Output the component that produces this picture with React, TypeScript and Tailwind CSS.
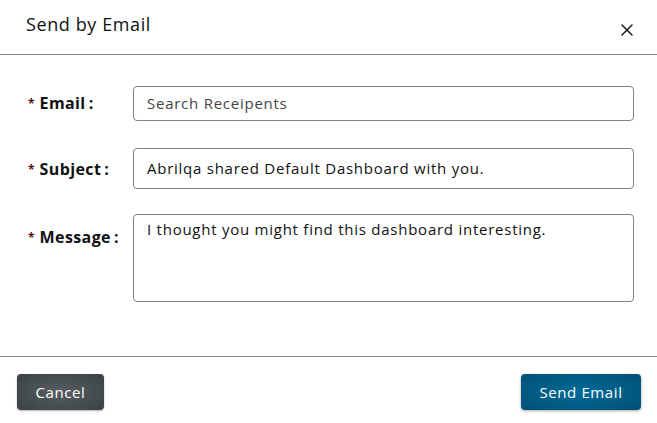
import { X } from 'lucide-react';

const fields = [
  { label: 'Email', value: 'Search Receipents', placeholder: true, box: 'h-[35px] flex items-center', labelPad: 'pt-[6px]' },
  { label: 'Subject', value: 'Abrilqa shared Default Dashboard with you.', placeholder: false, box: 'h-[41px] flex items-center', labelPad: 'pt-[10px]' },
  { label: 'Message', value: 'I thought you might find this dashboard interesting.', placeholder: false, box: 'h-[88px] pt-[3px]', labelPad: 'pt-[12px]' },
];

export default function App() {
  return (
    <div className="w-[657px] h-[423px] bg-white flex flex-col font-['Open_Sans',sans-serif] text-[#1a1a1a] overflow-hidden">
      {/* Header */}
      <div className="h-[55px] flex items-start justify-between pl-[26px] pr-[20px] pt-[12px] border-b border-[#8a8a8a]">
        <h1 className="text-[18px] leading-[24px] tracking-[0.6px] text-[#111]">Send by Email</h1>
        <X className="w-[20px] h-[20px] mt-[8px] text-[#222]" strokeWidth={1.9} />
      </div>

      {/* Form */}
      <div className="flex-1 flex flex-col pt-[31px] pl-[28px] pr-[23px]">
        {fields.map((f, i) => (
          <div key={f.label} className={`flex items-start ${i === 1 ? 'mt-[27px]' : i === 2 ? 'mt-[25px]' : ''}`}>
            <div className={`w-[105px] shrink-0 flex items-center ${f.labelPad}`}>
              <span className="text-[#5a1010] text-[12px] font-bold leading-none mt-[2px]">*</span>
              <span className="ml-[5px] text-[16px] font-bold text-[#111] leading-[22px] tracking-[0.4px]">{f.label}</span>
              <span className="text-[16px] font-bold text-[#111] leading-[22px] ml-[3px]">:</span>
            </div>
            <div
              className={`flex-1 border border-[#7d8488] rounded-[4px] px-[13px] text-[15px] tracking-[0.75px] ${f.box} ${
                f.placeholder ? 'text-[#444]' : 'text-[#111]'
              }`}
            >
              {f.value}
            </div>
          </div>
        ))}
      </div>

      {/* Footer */}
      <div className="border-t border-[#8a8a8a] h-[67px] flex items-center justify-between pl-[17px] pr-[16px] pt-[4px]">
        <button className="w-[87px] h-[36px] rounded-[4px] text-white text-[15px] tracking-[0.6px] bg-[radial-gradient(ellipse_at_center,#565e62_0%,#3a4144_100%)] shadow-[0_1px_2px_rgba(0,0,0,0.3)]">
          Cancel
        </button>
        <button className="w-[120px] h-[36px] rounded-[4px] text-white text-[15px] tracking-[0.6px] bg-[radial-gradient(ellipse_at_center,#006b98_0%,#004f74_100%)] shadow-[0_1px_3px_rgba(0,0,0,0.35)]">
          Send Email
        </button>
      </div>
    </div>
  );
}
